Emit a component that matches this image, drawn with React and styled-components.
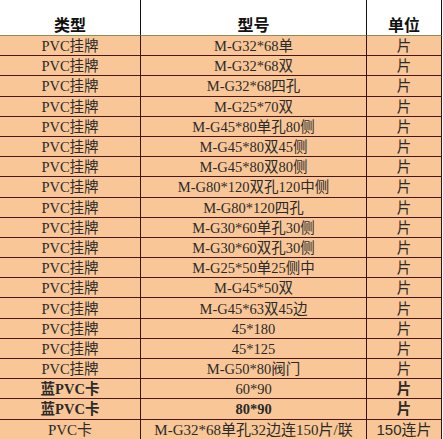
import React from 'react';
import styled, { createGlobalStyle } from 'styled-components';

const GlobalStyle = createGlobalStyle`
  html, body {
    margin: 0;
    padding: 0;
    background: #fff;
  }
  body {
    font-family: "Liberation Serif", "Noto Sans CJK SC", serif;
  }
`;

const Sheet = styled.div`
  display: grid;
  grid-template-columns: 141px 226px 75px;
  width: 442px;
`;

const HeadCell = styled.div`
  box-sizing: border-box;
  height: 36px;
  display: flex;
  align-items: flex-end;
  justify-content: center;
  padding-bottom: 1px;
  background: #fff;
  border-bottom: 1px solid #8d8c58;
  border-right: 1px solid #111;
  font-family: "Liberation Serif", "Noto Sans CJK SC", serif;
  font-weight: 700;
  font-size: 16px;
  line-height: 16px;
  color: #111;
`;

const Cell = styled.div`
  box-sizing: border-box;
  height: 20.2px;
  display: flex;
  align-items: center;
  justify-content: center;
  background: #f9c797;
  border-bottom: 1px solid #4a1616;
  border-right: 1px solid #3a1010;
  font-family: ${(p) =>
    p.$sans
      ? '"Liberation Sans", "Noto Sans CJK SC", sans-serif'
      : '"Liberation Serif", "Noto Sans CJK SC", serif'};
  font-size: ${(p) => (p.$size ? `${p.$size}px` : '14.5px')};
  font-weight: ${(p) => (p.$bold ? 700 : 400)};
  line-height: 18px;
  padding-top: 1px;
  color: #2a2a2a;
  white-space: nowrap;
`;

const rows = [
  { type: 'PVC挂牌', model: 'M-G32*68单', unit: '片' },
  { type: 'PVC挂牌', model: 'M-G32*68双', unit: '片' },
  { type: 'PVC挂牌', model: 'M-G32*68四孔', unit: '片' },
  { type: 'PVC挂牌', model: 'M-G25*70双', unit: '片' },
  { type: 'PVC挂牌', model: 'M-G45*80单孔80侧', unit: '片' },
  { type: 'PVC挂牌', model: 'M-G45*80双45侧', unit: '片' },
  { type: 'PVC挂牌', model: 'M-G45*80双80侧', unit: '片' },
  { type: 'PVC挂牌', model: 'M-G80*120双孔120中侧', unit: '片' },
  { type: 'PVC挂牌', model: 'M-G80*120四孔', unit: '片' },
  { type: 'PVC挂牌', model: 'M-G30*60单孔30侧', unit: '片' },
  { type: 'PVC挂牌', model: 'M-G30*60双孔30侧', unit: '片' },
  { type: 'PVC挂牌', model: 'M-G25*50单25侧中', unit: '片' },
  { type: 'PVC挂牌', model: 'M-G45*50双', unit: '片' },
  { type: 'PVC挂牌', model: 'M-G45*63双45边', unit: '片' },
  { type: 'PVC挂牌', model: '45*180', unit: '片' },
  { type: 'PVC挂牌', model: '45*125', unit: '片' },
  { type: 'PVC挂牌', model: 'M-G50*80阀门', unit: '片' },
  { type: '蓝PVC卡', model: '60*90', unit: '片', boldType: true, boldUnit: true },
  { type: '蓝PVC卡', model: '80*90', unit: '片', boldType: true, boldModel: true, boldUnit: true },
  { type: 'PVC卡', model: 'M-G32*68单孔32边连150片/联', unit: '150连片', size: 15, sansUnit: true },
];

export default function App() {
  return (
    <>
      <GlobalStyle />
      <Sheet>
        <HeadCell>类型</HeadCell>
        <HeadCell>型号</HeadCell>
        <HeadCell>单位</HeadCell>
        {rows.map((r, i) => (
          <React.Fragment key={i}>
            <Cell $bold={r.boldType} $size={r.size}>{r.type}</Cell>
            <Cell $bold={r.boldModel} $size={r.size}>{r.model}</Cell>
            <Cell $bold={r.boldUnit} $size={r.size} $sans={r.sansUnit}>{r.unit}</Cell>
          </React.Fragment>
        ))}
      </Sheet>
    </>
  );
}
